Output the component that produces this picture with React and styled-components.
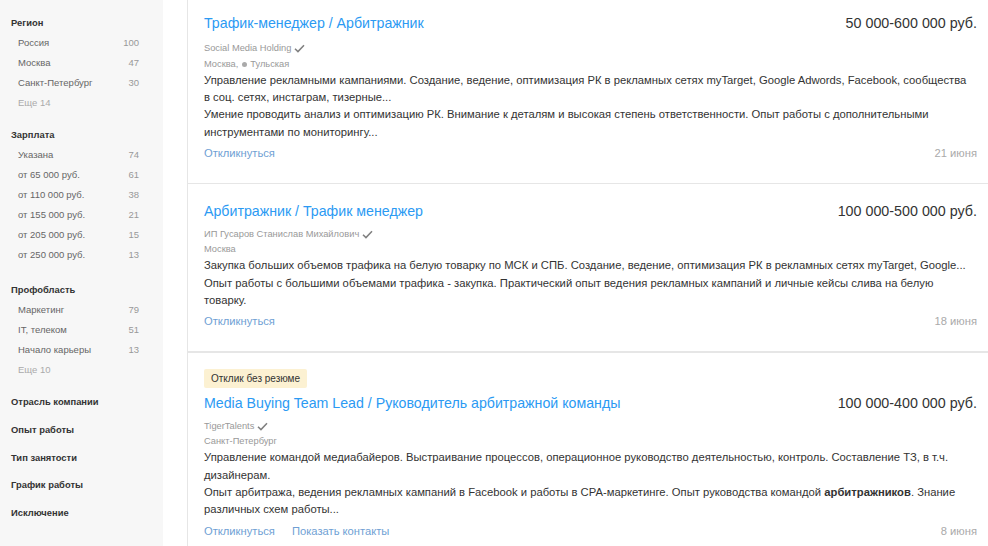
import styled, { createGlobalStyle } from "styled-components";

const GlobalStyle = createGlobalStyle`
  html, body {
    margin: 0;
    padding: 0;
    background: #ffffff;
    overflow: hidden;
  }
  body {
    font-family: "Liberation Sans", Arial, sans-serif;
    color: #333333;
  }
`;

const filters = [
  {
    title: "Регион",
    items: [
      ["Россия", 100],
      ["Москва", 47],
      ["Санкт-Петербург", 30],
    ],
    more: "Еще 14",
    gap: 11,
  },
  {
    title: "Зарплата",
    items: [
      ["Указана", 74],
      ["от 65 000 руб.", 61],
      ["от 110 000 руб.", 38],
      ["от 155 000 руб.", 21],
      ["от 205 000 руб.", 15],
      ["от 250 000 руб.", 13],
    ],
    gap: 14,
  },
  {
    title: "Профобласть",
    items: [
      ["Маркетинг", 79],
      ["IT, телеком", 51],
      ["Начало карьеры", 13],
    ],
    more: "Еще 10",
    gap: 11,
  },
  { title: "Отрасль компании", gap: 6.75 },
  { title: "Опыт работы", gap: 6.75 },
  { title: "Тип занятости", gap: 6.75 },
  { title: "График работы", gap: 6.75 },
  { title: "Исключение", gap: 6.75 },
];

const vacancies = [
  {
    title: "Трафик-менеджер / Арбитражник",
    salary: "50 000-600 000 руб.",
    company: "Social Media Holding",
    city: "Москва,",
    metro: "Тульская",
    text: [
      "Управление рекламными кампаниями. Создание, ведение, оптимизация РК в рекламных сетях myTarget, Google Adwords, Facebook, сообщества в соц. сетях, инстаграм, тизерные...",
      "Умение проводить анализ и оптимизацию РК. Внимание к деталям и высокая степень ответственности. Опыт работы с дополнительными инструментами по мониторингу...",
    ],
    date: "21 июня",
  },
  {
    title: "Арбитражник / Трафик менеджер",
    salary: "100 000-500 000 руб.",
    company: "ИП Гусаров Станислав Михайлович",
    city: "Москва",
    text: [
      "Закупка больших объемов трафика на белую товарку по МСК и СПБ. Создание, ведение, оптимизация РК в рекламных сетях myTarget, Google...",
      "Опыт работы с большими объемами трафика - закупка. Практический опыт ведения рекламных кампаний и личные кейсы слива на белую товарку.",
    ],
    date: "18 июня",
    sep: 2,
  },
  {
    badge: "Отклик без резюме",
    title: "Media Buying Team Lead / Руководитель арбитражной команды",
    salary: "100 000-400 000 руб.",
    company: "TigerTalents",
    city: "Санкт-Петербург",
    text: [
      "Управление командой медиабайеров. Выстраивание процессов, операционное руководство деятельностью, контроль. Составление ТЗ, в т.ч. дизайнерам.",
      <>
        Опыт арбитража, ведения рекламных кампаний в Facebook и работы в
        CPA-маркетинге. Опыт руководства командой <b>арбитражников</b>. Знание
        различных схем работы...
      </>,
    ],
    date: "8 июня",
    contacts: true,
  },
];

const Check = () => (
  <CheckIcon viewBox="0 0 12 10" width="11" height="9">
    <polyline points="1,5.2 4.3,8.4 11,1.4" />
  </CheckIcon>
);

const App = () => (
  <>
    <GlobalStyle />
    <Page>
      <Sidebar>
        {filters.map((group) => (
          <Group key={group.title} $gap={group.gap}>
            <GroupTitle>{group.title}</GroupTitle>
            {group.items &&
              group.items.map(([name, count]) => (
                <FilterItem key={name}>
                  <span>{name}</span>
                  <Count>{count}</Count>
                </FilterItem>
              ))}
            {group.more && <MoreLink>{group.more}</MoreLink>}
          </Group>
        ))}
      </Sidebar>

      <Main>
        {vacancies.map((v) => (
          <Card key={v.title} $sep={v.sep || 1} $badge={!!v.badge}>
            {v.badge && <Badge>{v.badge}</Badge>}
            <Header>
              <Title>{v.title}</Title>
              <Salary>{v.salary}</Salary>
            </Header>
            <Company $metro={!!v.metro}>
              {v.company}
              <Check />
            </Company>
            <Location $metro={!!v.metro}>
              {v.city}
              {v.metro && (
                <>
                  <MetroDot />
                  {v.metro}
                </>
              )}
            </Location>
            <Description>
              {v.text.map((line, i) => (
                <div key={i}>{line}</div>
              ))}
            </Description>
            <Footer>
              <Actions>
                <Action>Откликнуться</Action>
                {v.contacts && <Action>Показать контакты</Action>}
              </Actions>
              <DateLabel>{v.date}</DateLabel>
            </Footer>
          </Card>
        ))}
      </Main>
    </Page>
  </>
);

export default App;

const Page = styled.div`
  display: flex;
  align-items: flex-start;
  min-height: 100vh;
`;

const Sidebar = styled.aside`
  flex: 0 0 163px;
  box-sizing: border-box;
  min-height: 100vh;
  padding: 12px 24px 0 11px;
  background: #f7f7f7;
`;

const Group = styled.div`
  margin-bottom: ${(props) => props.$gap}px;
`;

const GroupTitle = styled.div`
  padding-top: 1px;
  font-size: 9.4px;
  font-weight: bold;
  line-height: 20px;
  color: #333333;
`;

const FilterItem = styled.div`
  display: flex;
  justify-content: space-between;
  padding-left: 7px;
  font-size: 9.5px;
  line-height: 20px;
  color: #666666;
`;

const Count = styled.span`
  color: #999999;
`;

const MoreLink = styled.div`
  padding-left: 7px;
  font-size: 9.5px;
  line-height: 20px;
  color: #aaaaaa;
`;

const Main = styled.main`
  flex: 1;
  margin-left: 24px;
  margin-top: -4px;
  border-left: 1px solid #e6e6e6;
  min-height: 600px;
`;

const Card = styled.article`
  padding: ${(props) => (props.$badge ? 15 : 17)}px 11px 21px 16px;
  border-bottom: ${(props) => props.$sep}px solid #e6e6e6;
`;

const Badge = styled.div`
  display: inline-block;
  padding: 0 7px;
  margin-bottom: 5px;
  font-size: 10px;
  line-height: 19px;
  color: #333333;
  background: #fcf1d2;
  border-radius: 2px;
`;

const Header = styled.div`
  display: flex;
  justify-content: space-between;
  align-items: baseline;
  line-height: 20px;
`;

const Title = styled.a`
  font-size: 14.2px;
  color: #2b9af3;
  cursor: pointer;
`;

const Salary = styled.div`
  font-size: 14.3px;
  color: #333333;
  white-space: nowrap;
`;

const Company = styled.div`
  display: flex;
  align-items: center;
  gap: 3px;
  margin-top: ${(props) => (props.$metro ? 8 : 6)}px;
  font-size: 9.3px;
  line-height: 15px;
  color: #999999;
`;

const CheckIcon = styled.svg`
  fill: none;
  stroke: #808080;
  stroke-width: 1.7;
`;

const Location = styled.div`
  display: flex;
  align-items: center;
  font-size: 9.3px;
  line-height: ${(props) => (props.$metro ? 16 : 15)}px;
  color: #999999;
`;

const MetroDot = styled.span`
  width: 5px;
  height: 5px;
  margin: 0 3px 0 4px;
  border-radius: 50%;
  background: #aaaaaa;
`;

const Description = styled.div`
  max-width: 766px;
  font-size: 11.25px;
  line-height: 17.2px;
  color: #333333;

  b {
    font-weight: bold;
  }
`;

const Footer = styled.div`
  display: flex;
  justify-content: space-between;
  align-items: center;
  margin-top: 4.5px;
  line-height: 17px;
`;

const Actions = styled.div`
  display: flex;
  gap: 17px;
`;

const Action = styled.a`
  font-size: 11.2px;
  color: #6f9fd4;
  cursor: pointer;
`;

const DateLabel = styled.span`
  font-size: 11.2px;
  color: #aaaaaa;
`;
